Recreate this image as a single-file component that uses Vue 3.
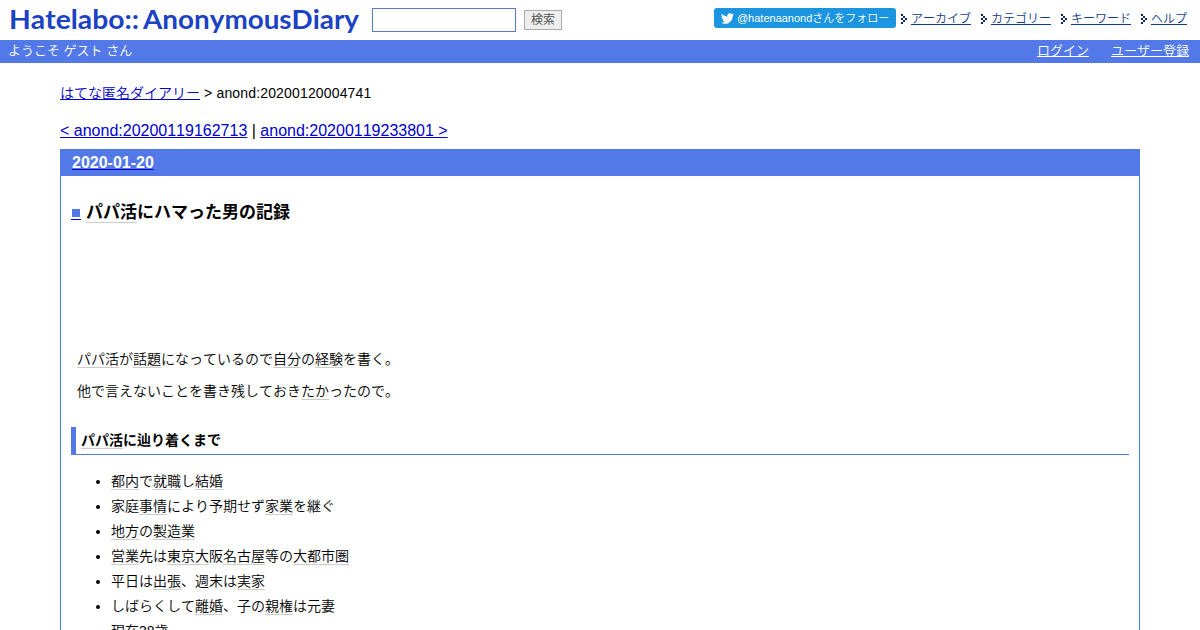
<!--
  App.vue - 匿名ダイアリーの記事ページ
-->
<template>
  <div class="page">
    <header class="header">
      <svg class="header__logo" width="352" height="40" viewBox="0 0 352 40" role="img">
        <text class="header__logo-text" x="0" y="28.7" textLength="130" lengthAdjust="spacingAndGlyphs">Hatelabo::</text>
        <text class="header__logo-text" x="134" y="28.7" textLength="216" lengthAdjust="spacingAndGlyphs">AnonymousDiary</text>
      </svg>
      <form class="search" @submit.prevent>
        <input v-model="keyword" class="search__input" type="text" />
        <button class="search__button" type="submit">検索</button>
      </form>
      <a class="follow" href="#">
        <svg class="follow__icon" width="13" height="13" viewBox="0 0 24 24" fill="#fff">
          <path d="M23.95 4.57a10 10 0 0 1-2.82.77 4.96 4.96 0 0 0 2.16-2.72c-.95.55-2 .96-3.13 1.18a4.92 4.92 0 0 0-8.38 4.48C7.69 8.1 4.07 6.13 1.64 3.16a4.92 4.92 0 0 0 1.52 6.57 4.9 4.9 0 0 1-2.23-.61v.06a4.92 4.92 0 0 0 3.95 4.83 5 5 0 0 1-2.21.08 4.94 4.94 0 0 0 4.6 3.42A9.87 9.87 0 0 1 0 19.54a14 14 0 0 0 7.55 2.21c9.05 0 14-7.5 14-13.98 0-.21 0-.42-.02-.63a9.94 9.94 0 0 0 2.42-2.57z" />
        </svg>
        <span>@hatenaanondさんをフォロー</span>
      </a>
      <ul class="menu">
        <li v-for="item in menu" :key="item" class="menu__item">
          <svg class="menu__mark" width="6" height="10" viewBox="0 0 6 10" fill="#0b2a6b" shape-rendering="crispEdges">
            <path d="M0 0h2v2h-2zM2 2h2v2h-2zM4 4h2v2h-2zM2 6h2v2h-2zM0 8h2v2h-2zM0 4h2v2h-2z" />
          </svg>
          <a href="#">{{ item }}</a>
        </li>
      </ul>
    </header>

    <div class="userbar">
      <span class="userbar__name">ようこそ ゲスト さん</span>
      <a href="#">ログイン</a>
      <a href="#">ユーザー登録</a>
    </div>

    <main class="content">
      <div class="breadcrumb"><a href="#">はてな匿名ダイアリー</a><span class="breadcrumb__id"> &gt; anond:20200120004741</span></div>
      <div class="pager"><a href="#">&lt; anond:20200119162713</a> | <a href="#">anond:20200119233801 &gt;</a></div>

      <article class="day">
        <h2 class="day__date"><a href="#"><span>2020-01-20</span></a></h2>
        <div class="day__body">
          <h3 class="title"><a class="title__mark" href="#"><span></span></a><a class="kw" href="#">パパ活</a>にハマった男の記録</h3>
          <!-- 広告枠 -->
          <div class="ad"></div>
          <p v-for="(line, i) in paragraphs" :key="i" class="text">
            <template v-for="(part, j) in line" :key="j"><a v-if="part.link" class="kw" href="#">{{ part.text }}</a><template v-else>{{ part.text }}</template></template>
          </p>
          <h4 class="subtitle"><a class="kw" href="#">パパ活</a>に辿り着くまで</h4>
          <ul class="list">
            <li v-for="(line, i) in items" :key="i">
              <template v-for="(part, j) in line" :key="j"><a v-if="part.link" class="kw" href="#">{{ part.text }}</a><template v-else>{{ part.text }}</template></template>
            </li>
          </ul>
        </div>
      </article>
    </main>
  </div>
</template>

<script setup>
import { ref } from 'vue'

const keyword = ref('')

const menu = ['アーカイブ', 'カテゴリー', 'キーワード', 'ヘルプ']

// [[ ]] で囲んだ語をキーワードリンクに分割する
function parse(source) {
  return source
    .split(/(\[\[.+?\]\])/)
    .filter(Boolean)
    .map((s) => (s.startsWith('[[') ? { text: s.slice(2, -2), link: true } : { text: s, link: false }))
}

const paragraphs = [
  '[[パパ活]]が[[話題]]になっているので[[自分]]の[[経験]]を書く。',
  '他で言えないことを書き残しておき[[たか]]ったので。',
].map(parse)

const items = [
  '[[都内]]で[[就職]]し[[結婚]]',
  '家庭[[事情]]により予期せず[[家業]]を継ぐ',
  '[[地方]]の[[製造業]]',
  '[[営業]]先は[[東京]][[大]]阪[[名古屋]]等の[[大都市圏]]',
  '平日は[[出張]]、週末は[[実家]]',
  'しばらくして[[離婚]]、子の[[親権]]は元妻',
  '[[現在]]38歳',
].map(parse)
</script>

<style>
body {
  background: #fff;
  overflow: hidden;
}
</style>

<style scoped>
.page {
  height: 630px;
  overflow: hidden;
  color: #000;
  font-family: "Liberation Sans", "Noto Sans CJK JP", sans-serif;
  font-size: 14px;
  font-weight: 350;
  font-kerning: none;
}
a {
  color: #0000cc;
}
.header {
  display: flex;
  align-items: flex-start;
  height: 40px;
  padding: 0 13px 0 9px;
}
.header__logo {
  flex-shrink: 0;
}
.header__logo-text {
  fill: #1c42c4;
  font-family: Lato, "Liberation Sans", sans-serif;
  font-size: 26px;
  font-weight: 700;
}
.search {
  display: flex;
  align-items: center;
  gap: 8px;
  height: 24px;
  margin: 8px 0 0 11px;
}
.search__input {
  box-sizing: border-box;
  width: 144px;
  height: 24px;
  padding: 0 4px;
  border: 1px solid #5a78c8;
  outline: none;
}
.search__button {
  box-sizing: border-box;
  width: 38px;
  height: 20px;
  padding: 0;
  border: 1px solid #aaa;
  background: #eee;
  color: #555;
  font-family: inherit;
  font-size: 12px;
  line-height: 16px;
}
.follow {
  display: flex;
  align-items: center;
  gap: 3px;
  box-sizing: border-box;
  width: 182px;
  height: 20px;
  margin: 8px 5px 0 auto;
  padding-left: 7px;
  border-radius: 3px;
  background: #1b95e0;
  color: #fff;
  font-size: 11px;
  line-height: 18px;
  text-decoration: none;
  white-space: nowrap;
}
.follow__icon {
  flex-shrink: 0;
}
.menu {
  display: flex;
  gap: 10px;
  margin: 9px 0 0;
  padding: 0;
  list-style: none;
  font-size: 12px;
  line-height: 18px;
}
.menu__item {
  display: flex;
  align-items: center;
  gap: 4px;
  white-space: nowrap;
}
.menu__item a {
  padding-top: 1px;
  color: #103a8c;
}
.userbar {
  display: flex;
  gap: 22px;
  height: 23px;
  padding: 0 11px 0 8px;
  background: #5279e7;
  color: #fff;
  font-size: 13px;
  line-height: 22px;
}
.userbar__name {
  flex: 1;
}
.userbar a {
  color: #fff;
}
.content {
  padding: 20px 60px 0;
}
.breadcrumb {
  height: 37px;
  line-height: 20px;
}
.breadcrumb__id {
  letter-spacing: 0.16px;
}
.pager {
  height: 29px;
  font-size: 16px;
  line-height: 22px;
}
.day {
  border: 1px solid #5279e7;
}
.day__date {
  height: 26px;
  margin: 0;
  padding-left: 11px;
  background: #5279e7;
  font-size: 16px;
  line-height: 26px;
}
.day__date span {
  color: #fff;
}
.day__body {
  padding: 0 10px;
}
.title {
  display: flex;
  align-items: center;
  height: 24px;
  margin: 23px 0 0;
  padding-top: 2px;
  font-size: 17px;
  line-height: 24px;
}
.title__mark {
  align-self: flex-start;
  box-sizing: border-box;
  width: 10px;
  height: 11px;
  margin: 8px 5px 0 0;
  border-bottom: 1px solid #0000cc;
}
.title__mark span {
  display: block;
  width: 8px;
  height: 8px;
  margin: 0 1px;
  background: #5279e7;
}
.kw {
  border-bottom: 1px solid #ccc;
  color: #000;
  text-decoration: none;
}
.title .kw {
  align-self: flex-start;
  height: 19px;
  margin-top: 2px;
  line-height: 20px;
}
.ad {
  height: 122px;
}
.text {
  margin: 0 6px 7px;
  line-height: 25px;
}
.subtitle {
  height: 27px;
  margin: 23px 0 14px;
  padding-left: 5px;
  border-bottom: 1px solid #5279e7;
  border-left: 5px solid #5279e7;
  font-size: 14px;
  line-height: 26px;
}
.list {
  margin: 0;
  padding-left: 40px;
  line-height: 25px;
}
</style>
